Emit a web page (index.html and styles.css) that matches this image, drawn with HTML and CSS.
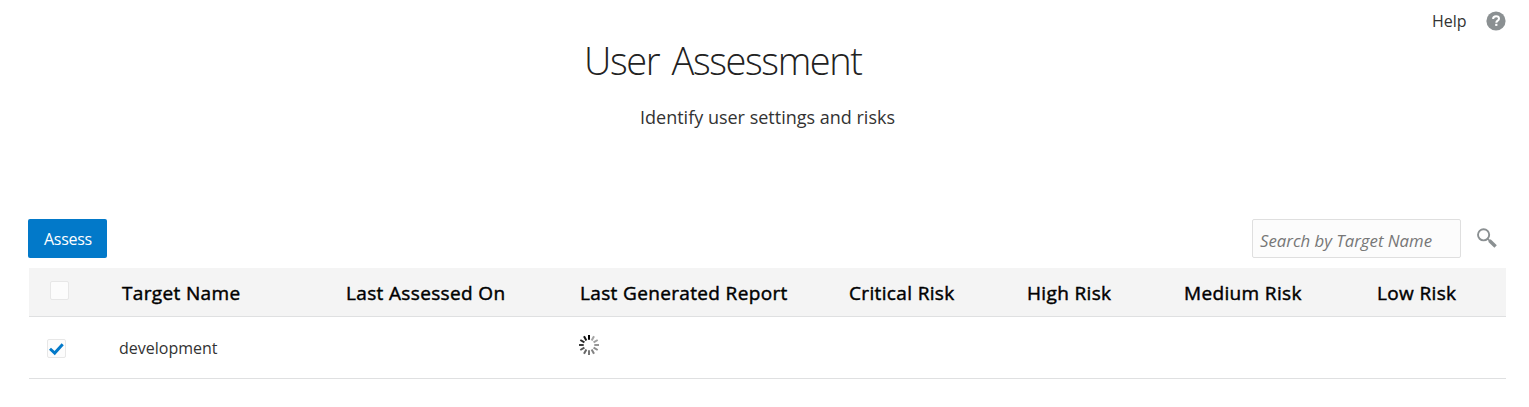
FILE: index.html
```
<!DOCTYPE html>
<html lang="en">
<head>
<meta charset="utf-8">
<title>User Assessment</title>
<link rel="stylesheet" href="styles.css">
</head>
<body>
<header class="topbar">
  <a class="help">Help</a>
  <svg class="help-icon" width="20" height="20" viewBox="0 0 20 20" aria-hidden="true"><circle cx="10" cy="10" r="9.6" fill="#8b9092"/><path d="M7.1 8C7.1 6.3 8.3 5.3 10.1 5.3c1.7 0 2.9 1 2.9 2.4 0 2.1-2.7 1.8-2.7 4" fill="none" stroke="#fff" stroke-width="2"/><rect x="9.2" y="12.8" width="2.2" height="2.1" fill="#fff"/></svg>
</header>
<main>
  <h1 class="title">User Assessment</h1>
  <p class="subtitle">Identify user settings and risks</p>
  <div class="toolbar">
    <button class="assess">Assess</button>
    <div class="search">
      <div class="search-field">Search by Target Name</div>
      <svg class="search-icon" width="21" height="21" viewBox="0 0 21 21" aria-hidden="true"><circle cx="6.6" cy="6.8" r="5.6" fill="none" stroke="#8b9092" stroke-width="1.9"/><path d="M10.8 10.9l2 2" stroke="#8b9092" stroke-width="1.7"/><path d="M12.4 12.6l6.2 6" stroke="#8b9092" stroke-width="3.5"/></svg>
    </div>
  </div>
  <section class="table">
    <div class="row head">
      <div class="check-cell"><span class="check"></span></div>
      <div>Target Name</div>
      <div>Last Assessed On</div>
      <div>Last Generated Report</div>
      <div>Critical Risk</div>
      <div>High Risk</div>
      <div>Medium Risk</div>
      <div>Low Risk</div>
    </div>
    <div class="row item">
      <div class="check-cell"><span class="check"><svg width="19" height="19" viewBox="0 0 19 19" aria-hidden="true"><path d="M3 9.8l4.7 4.3 8-8.8" fill="none" stroke="#0279c9" stroke-width="2.9"/></svg></span></div>
      <div class="name">development</div>
      <div></div>
      <div class="loading"><svg width="20" height="20" viewBox="-10 -10 20 20" stroke-width="2" aria-label="Loading">
        <path d="M0-5.3V-10" stroke="#000"/>
        <path d="M0-5.3V-10" stroke="#a3a3a3" transform="rotate(30)"/>
        <path d="M0-5.3V-10" stroke="#a0a0a0" transform="rotate(60)"/>
        <path d="M0-5.3V-10" stroke="#969696" transform="rotate(90)"/>
        <path d="M0-5.3V-10" stroke="#8c8c8c" transform="rotate(120)"/>
        <path d="M0-5.3V-10" stroke="#828282" transform="rotate(150)"/>
        <path d="M0-5.3V-10" stroke="#777" transform="rotate(180)"/>
        <path d="M0-5.3V-10" stroke="#666" transform="rotate(210)"/>
        <path d="M0-5.3V-10" stroke="#555" transform="rotate(240)"/>
        <path d="M0-5.3V-10" stroke="#3c3c3c" transform="rotate(270)"/>
        <path d="M0-5.3V-10" stroke="#282828" transform="rotate(300)"/>
        <path d="M0-5.3V-10" stroke="#141414" transform="rotate(330)"/>
      </svg></div>
    </div>
  </section>
</main>
</body>
</html>
```
FILE: styles.css
```
* { box-sizing: border-box; }
body { margin: 0; background: #fff; color: #333; font: 16px/22px "Open Sans", "Noto Sans", sans-serif; white-space: nowrap; overflow: hidden; }
.topbar { height: 36px; padding: 10px 23px 0 1432px; display: flex; justify-content: space-between; align-items: flex-start; }
.help { font-size: 16px; line-height: 22px; }
.help-icon { margin-top: 1px; }
.title { margin: 0; padding-left: 584px; height: 64px; font-size: 38px; line-height: 48px; font-weight: 300; letter-spacing: -1.4px; word-spacing: 4px; color: #222; }
.subtitle { margin: 0; padding: 4px 0 0 640px; height: 119px; font-size: 18px; line-height: 26px; }
.toolbar { height: 39px; padding: 0 31px 0 28px; display: flex; justify-content: space-between; }
.assess { width: 79px; height: 39px; padding: 0 0 0 16px; border: 0; border-radius: 2px; background: #0279c9; color: #fff; font: inherit; line-height: 38px; letter-spacing: -0.3px; text-align: left; }
.search { display: flex; gap: 16px; }
.search-field { width: 209px; height: 39px; padding-left: 7px; border: 1px solid #dfdfdf; border-radius: 2px; background: #fcfcfc; color: #777; font-size: 16.8px; font-style: italic; line-height: 42px; }
.search-icon { margin-top: 9px; }
.table { margin: 10px 23px 0 29px; }
.row { display: grid; grid-template-columns: 93px 224px 234px 269px 178px 157px 193px 129px; border-bottom: 1px solid #dfe0e1; }
.head { height: 49px; background: #f4f4f4; color: #000; font-size: 19px; font-weight: 400; line-height: 50px; letter-spacing: 0.35px; -webkit-text-stroke: 0.45px #000; }
.item { height: 62px; line-height: 62px; }
.check-cell { padding: 13px 0 0 21px; line-height: 0; }
.item .check-cell { padding: 22px 0 0 18px; }
.check { display: block; width: 19px; height: 19px; border: 1px solid #e7e7e7; border-radius: 2px; background: #fcfcfc; }
.check svg { display: block; margin: -1px; }
.name { margin-left: -3px; }
.loading { padding-top: 18px; line-height: 0; margin-left: -1px; }
```
